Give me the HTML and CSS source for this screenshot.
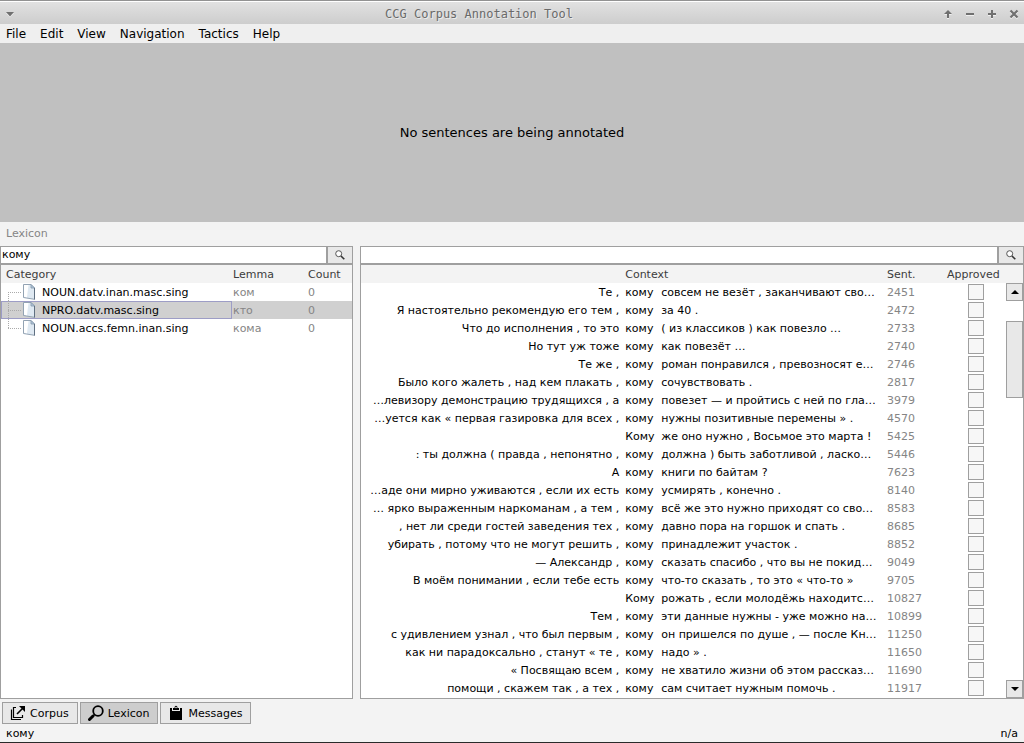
FILE: index.html
```
<!DOCTYPE html>
<html lang="en">
<head>
<meta charset="utf-8">
<title>CCG Corpus Annotation Tool</title>
<link rel="stylesheet" href="styles.css">
</head>
<body>
<svg class="defs" aria-hidden="true">
  <symbol id="mag" viewBox="0 0 10 10"><circle cx="3.7" cy="3.7" r="3" fill="#fff" stroke="#555" stroke-width="1"/><path d="M6 6L9.3 9.3" stroke="#333" stroke-width="1.6"/></symbol>
  <symbol id="doc" viewBox="0 0 14 16"><path d="M1.5 .5H9L12.5 4V15.3L1.5 13.5Z" fill="#dfe9f2" stroke="#93a3b3"/><path d="M2 1H6.5L5 13.2L2 12.8Z" fill="#fff"/><path d="M9 .5V4H12.5Z" fill="#b4c8dc" stroke="#8497aa" stroke-width=".8"/><path d="M12.5 4V15.5" stroke="#5f6f80"/></symbol>
</svg>
<header class="titlebar">
  <button class="wm" aria-label="Window menu"><svg width="10" height="6"><path d="M1 1H9L5 5.5Z" fill="#707070"/></svg></button>
  <h1 class="title">CCG Corpus Annotation Tool</h1>
  <div class="wm-group">
    <button class="wm" aria-label="Shade"><svg width="10" height="10"><path d="M5 1L9 5H6V9H4V5H1Z" fill="#707070"/></svg></button>
    <button class="wm" aria-label="Minimize"><svg width="10" height="10"><path d="M1 4H9V6H1Z" fill="#707070"/></svg></button>
    <button class="wm" aria-label="Maximize"><svg width="10" height="10"><path d="M4 1H6V4H9V6H6V9H4V6H1V4H4Z" fill="#707070"/></svg></button>
    <button class="wm" aria-label="Close"><svg width="10" height="10"><path d="M1.5 1.5L8.5 8.5M8.5 1.5L1.5 8.5" stroke="#707070" stroke-width="2.2"/></svg></button>
  </div>
</header>
<nav class="menubar">
  <button>File</button><button>Edit</button><button>View</button><button>Navigation</button><button>Tactics</button><button>Help</button>
</nav>
<main class="canvas">No sentences are being annotated</main>
<section class="dock">
  <h2 class="dock-title">Lexicon</h2>
  <div class="panes">
    <div class="pane pane-left">
      <form class="search">
        <input type="text" value="кому" aria-label="Word">
        <button type="button" aria-label="Search word"><svg width="10" height="10"><use href="#mag"/></svg></button>
      </form>
      <div class="view">
        <table class="grid categories">
          <colgroup><col><col class="c-lemma"><col class="c-count"></colgroup>
          <thead><tr><th>Category</th><th>Lemma</th><th>Count</th></tr></thead>
          <tbody>
            <tr><td><div class="node first"><svg width="14" height="16"><use href="#doc"/></svg><span>NOUN.datv.inan.masc.sing</span></div></td><td>ком</td><td>0</td></tr>
            <tr class="selected"><td><div class="node"><svg width="14" height="16"><use href="#doc"/></svg><span>NPRO.datv.masc.sing</span></div></td><td>кто</td><td>0</td></tr>
            <tr><td><div class="node last"><svg width="14" height="16"><use href="#doc"/></svg><span>NOUN.accs.femn.inan.sing</span></div></td><td>кома</td><td>0</td></tr>
          </tbody>
        </table>
      </div>
    </div>
    <div class="pane pane-right">
      <form class="search">
        <input type="text" aria-label="Context filter">
        <button type="button" aria-label="Search context"><svg width="10" height="10"><use href="#mag"/></svg></button>
      </form>
      <div class="view">
        <table class="grid contexts">
          <colgroup><col class="c-before"><col class="c-word"><col><col class="c-sent"><col class="c-appr"></colgroup>
          <thead><tr><th></th><th colspan="2">Context</th><th>Sent.</th><th>Approved</th></tr></thead>
          <tbody>
            <tr><td>Те ,</td><td>кому</td><td>совсем не везёт , заканчивают сво…</td><td>2451</td><td><input type="checkbox" aria-label="Approve 2451"></td></tr>
            <tr><td>Я настоятельно рекомендую его тем ,</td><td>кому</td><td>за 40 .</td><td>2472</td><td><input type="checkbox" aria-label="Approve 2472"></td></tr>
            <tr><td>Что до исполнения , то это</td><td>кому</td><td>( из классиков ) как повезло …</td><td>2733</td><td><input type="checkbox" aria-label="Approve 2733"></td></tr>
            <tr><td>Но тут уж тоже</td><td>кому</td><td>как повезёт …</td><td>2740</td><td><input type="checkbox" aria-label="Approve 2740"></td></tr>
            <tr><td>Те же ,</td><td>кому</td><td>роман понравился , превозносят е…</td><td>2746</td><td><input type="checkbox" aria-label="Approve 2746"></td></tr>
            <tr><td>Было кого жалеть , над кем плакать ,</td><td>кому</td><td>сочувствовать .</td><td>2817</td><td><input type="checkbox" aria-label="Approve 2817"></td></tr>
            <tr><td>…левизору демонстрацию трудящихся , а</td><td>кому</td><td>повезет — и пройтись с ней по гла…</td><td>3979</td><td><input type="checkbox" aria-label="Approve 3979"></td></tr>
            <tr><td>…уется как « первая газировка для всех ,</td><td>кому</td><td>нужны позитивные перемены » .</td><td>4570</td><td><input type="checkbox" aria-label="Approve 4570"></td></tr>
            <tr><td></td><td>Кому</td><td>же оно нужно , Восьмое это марта !</td><td>5425</td><td><input type="checkbox" aria-label="Approve 5425"></td></tr>
            <tr><td>: ты должна ( правда , непонятно ,</td><td>кому</td><td>должна ) быть заботливой , ласко…</td><td>5446</td><td><input type="checkbox" aria-label="Approve 5446"></td></tr>
            <tr><td>А</td><td>кому</td><td>книги по байтам ?</td><td>7623</td><td><input type="checkbox" aria-label="Approve 7623"></td></tr>
            <tr><td>…аде они мирно уживаются , если их есть</td><td>кому</td><td>усмирять , конечно .</td><td>8140</td><td><input type="checkbox" aria-label="Approve 8140"></td></tr>
            <tr><td>… ярко выраженным наркоманам , а тем ,</td><td>кому</td><td>всё же это нужно приходят со сво…</td><td>8583</td><td><input type="checkbox" aria-label="Approve 8583"></td></tr>
            <tr><td>, нет ли среди гостей заведения тех ,</td><td>кому</td><td>давно пора на горшок и спать .</td><td>8685</td><td><input type="checkbox" aria-label="Approve 8685"></td></tr>
            <tr><td>убирать , потому что не могут решить ,</td><td>кому</td><td>принадлежит участок .</td><td>8852</td><td><input type="checkbox" aria-label="Approve 8852"></td></tr>
            <tr><td>— Александр ,</td><td>кому</td><td>сказать спасибо , что вы не покид…</td><td>9049</td><td><input type="checkbox" aria-label="Approve 9049"></td></tr>
            <tr><td>В моём понимании , если тебе есть</td><td>кому</td><td>что-то сказать , то это « что-то »</td><td>9705</td><td><input type="checkbox" aria-label="Approve 9705"></td></tr>
            <tr><td></td><td>Кому</td><td>рожать , если молодёжь находитс…</td><td>10827</td><td><input type="checkbox" aria-label="Approve 10827"></td></tr>
            <tr><td>Тем ,</td><td>кому</td><td>эти данные нужны - уже можно на…</td><td>10899</td><td><input type="checkbox" aria-label="Approve 10899"></td></tr>
            <tr><td>с удивлением узнал , что был первым ,</td><td>кому</td><td>он пришелся по душе , — после Кн…</td><td>11250</td><td><input type="checkbox" aria-label="Approve 11250"></td></tr>
            <tr><td>как ни парадоксально , станут « те ,</td><td>кому</td><td>надо » .</td><td>11650</td><td><input type="checkbox" aria-label="Approve 11650"></td></tr>
            <tr><td>« Посвящаю всем ,</td><td>кому</td><td>не хватило жизни об этом рассказ…</td><td>11690</td><td><input type="checkbox" aria-label="Approve 11690"></td></tr>
            <tr><td>помощи , скажем так , а тех ,</td><td>кому</td><td>сам считает нужным помочь .</td><td>11917</td><td><input type="checkbox" aria-label="Approve 11917"></td></tr>
          </tbody>
        </table>
        <div class="scroll">
          <div class="scroll-head"></div>
          <button class="arrow" aria-label="Scroll up"><svg width="8" height="4"><path d="M0 4L4 0L8 4Z"/></svg></button>
          <div class="track-above"></div>
          <div class="thumb"></div>
          <div class="track-below"></div>
          <button class="arrow" aria-label="Scroll down"><svg width="8" height="4"><path d="M0 0L4 4L8 0Z"/></svg></button>
        </div>
      </div>
    </div>
  </div>
</section>
<div class="tabs">
  <button><svg width="16" height="16"><path d="M6 2.5H3.5V12.5H12.5V10M1.5 4.5V14.5H11" fill="none" stroke="#000" stroke-width="1.2"/><path d="M7 9L13 3" stroke="#000" stroke-width="1.6"/><path d="M9 1H15V7Z"/></svg><span>Corpus</span></button>
  <button class="active"><svg width="16" height="16"><circle cx="10" cy="6" r="4.8" fill="none" stroke="#000" stroke-width="1.8"/><path d="M6.5 9.5L4.8 11.2" stroke="#000" stroke-width="1.5"/><path d="M5 11L1.5 14.5" stroke="#000" stroke-width="3" stroke-linecap="round"/></svg><span>Lexicon</span></button>
  <button><svg width="16" height="16"><path d="M2 3H4V6H12V3H14V15H2Z"/><path d="M5 5V3H6.5Q6.5 .8 8 .8T9.5 3H11V5Z"/><circle cx="8" cy="2.5" r=".8" fill="#e8e8e8"/></svg><span>Messages</span></button>
</div>
<footer class="status"><span>кому</span><span>n/a</span></footer>
</body>
</html>
```
FILE: styles.css
```
* { box-sizing: border-box; }
body {
  margin: 0;
  min-height: 100vh;
  display: flex;
  flex-direction: column;
  background: #f3f3f3;
  color: #000;
  font: 11px/18px "DejaVu Sans", sans-serif;
  border-bottom: 1px solid #2a2a2a;
}
button, input { font: inherit; color: inherit; margin: 0; }
button { padding: 0; border: 0; background: none; }
svg { display: block; flex: none; }
.defs { display: none; }

.titlebar {
  height: 24px;
  display: flex;
  align-items: center;
  justify-content: space-between;
  padding: 2px 5px 0;
  border-top: 1px solid #929292;
  box-shadow: inset 0 1px #fff;
  background: linear-gradient(#e2e2e2, #cdcdcd);
}
.title {
  flex: 1;
  margin: 0;
  text-align: center;
  font: 12px/20px "DejaVu Sans Mono", monospace;
  color: #6a6a6a;
  text-shadow: 1px 1px #ececec;
}
.wm { padding: 0; filter: drop-shadow(0 1px #f0f0f0); }
.wm-group { display: flex; gap: 12px; }

.menubar {
  height: 19px;
  display: flex;
  gap: 14px;
  padding: 0 6px;
  background: #efefef;
  font-size: 12px;
}
.canvas {
  flex: 1;
  min-height: 160px;
  display: flex;
  align-items: center;
  justify-content: center;
  background: #c0c0c0;
  font-size: 13px;
}
.dock-title {
  margin: 0;
  padding: 3px 6px;
  font-size: 11px;
  font-weight: normal;
  color: #858585;
}
.panes { display: flex; gap: 7px; }
.pane { display: flex; flex-direction: column; min-width: 0; }
.pane-left { flex: 353 1 0; }
.pane-right { flex: 664 1 0; }
.search {
  display: flex;
  height: 18px;
  border: 1px solid #9f9f9f;
}
.search input {
  flex: 1;
  min-width: 0;
  padding: 0 1px;
  border: 0;
  background: #fff;
}
.search button {
  width: 26px;
  display: flex;
  align-items: center;
  justify-content: center;
  border-left: 2px solid #9f9f9f;
  background: #e8e8e8;
}
.view {
  flex: 1;
  display: flex;
  align-items: stretch;
  border: 1px solid #9f9f9f;
  background: #fff;
}
.grid {
  flex: 1;
  width: 0;
  align-self: flex-start;
  margin-bottom: 1px;
  table-layout: fixed;
  border-collapse: collapse;
}
.grid th, .grid td {
  height: 18px;
  padding: 2px 0 0 3px;
  line-height: 16px;
  text-align: left;
  font-weight: normal;
  white-space: nowrap;
  overflow: hidden;
}
.grid th { background: #f3f3f3; color: #3c3c3c; }
.categories td { color: #858585; }
.categories th:first-child { padding-left: 5px; }
.categories td:first-child { padding: 0; color: #000; }
.categories th:nth-child(2), .categories td:nth-child(2) { padding-left: 1px; }
.categories th:nth-child(3), .categories td:nth-child(3) { padding-left: 2px; }
.c-lemma { width: 74px; }
.c-count { width: 46px; }
.selected td { background: #d0d0d0; }
.node {
  display: flex;
  align-items: center;
  gap: 6px;
  height: 18px;
  border: 1px solid transparent;
}
.node span, .tabs span { padding-top: 2px; }
.selected .node { border-color: #9d9dc6; }
.node::before {
  content: "";
  width: 13px;
  height: 18px;
  margin: 0 -5px 0 6px;
  background:
    repeating-linear-gradient(90deg, #aaa 0 1px, transparent 1px 2px) 0 9px / 100% 1px no-repeat,
    repeating-linear-gradient(#aaa 0 1px, transparent 1px 2px) 0 0 / 1px 100% no-repeat;
}
.node.first::before { background-position: 0 9px, 0 9px; }
.node.last::before { background-size: 100% 1px, 1px 10px; }

.c-before { width: 40.5%; }
.c-word { width: 36px; }
.c-sent { width: 60px; }
.c-appr { width: 62px; }
.contexts td:first-child { padding: 2px 3px 0 0; text-align: right; }
.contexts td:nth-child(4) { color: #858585; }
.contexts td:last-child { padding-top: 0; }
.contexts input {
  appearance: none;
  display: block;
  width: 16px;
  height: 16px;
  margin: 0 0 0 21px;
  border: 1px solid #9f9f9f;
  background: #f7f7f7;
}
.scroll { width: 17px; display: flex; flex-direction: column; }
.scroll-head { height: 18px; background: #f3f3f3; }
.arrow {
  height: 18px;
  display: flex;
  align-items: center;
  justify-content: center;
  border: 1px solid #9f9f9f;
  background: #e8e8e8;
}
.track-above { flex: 20 1 0; }
.thumb { flex: 75 1 0; border: 1px solid #9f9f9f; background: #e8e8e8; }
.track-below { flex: 284 1 0; }

.tabs { display: flex; gap: 2px; padding: 3px 2px 0; }
.tabs button {
  height: 22px;
  display: flex;
  align-items: center;
  gap: 4px;
  padding: 0 8px 0 7px;
  border: 1px solid #9f9f9f;
  background: #e8e8e8;
}
.tabs .active { background: #cdcdcd; }
.status {
  height: 18px;
  display: flex;
  justify-content: space-between;
  padding: 1px 6px 0;
}
```
